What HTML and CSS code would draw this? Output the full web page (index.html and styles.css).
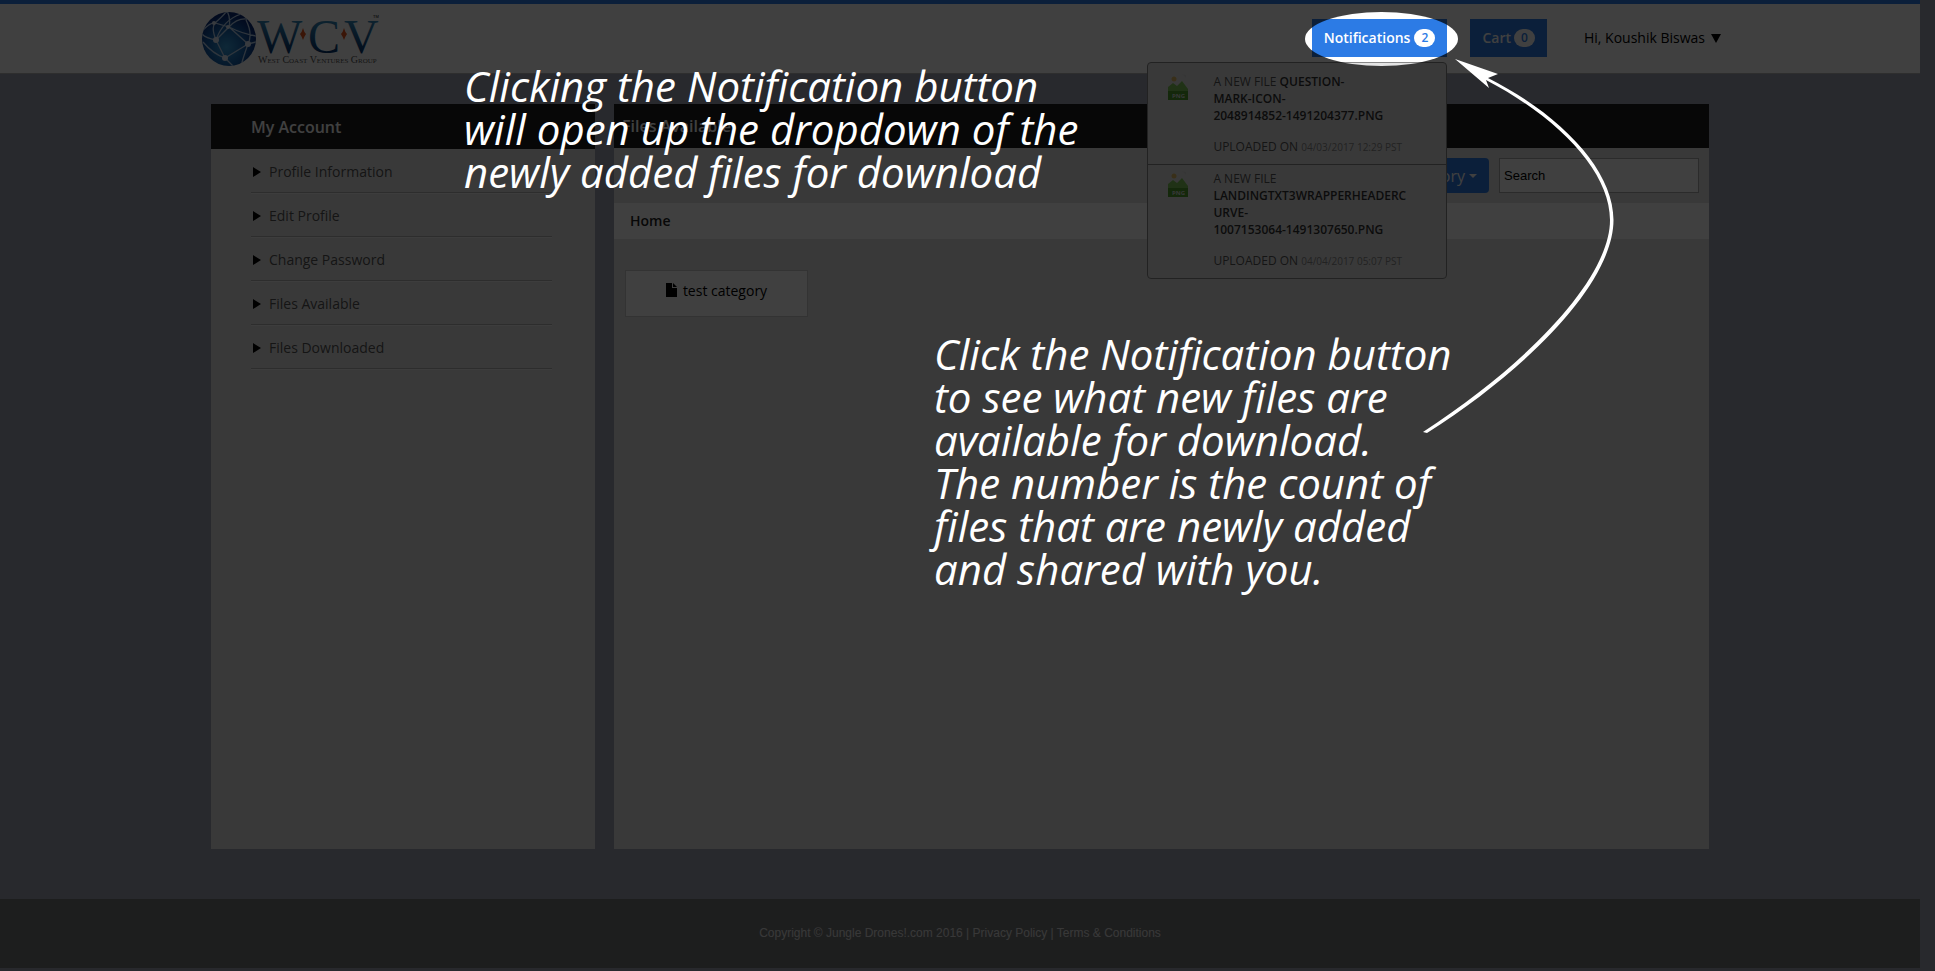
FILE: index.html
```html
<!DOCTYPE html>
<html lang="en">
<head>
<meta charset="utf-8">
<title>Files Available</title>
<link rel="stylesheet" href="styles.css">
</head>
<body>
<header class="topbar">
  <a class="logo" href="#" aria-label="West Coast Ventures Group">
    <svg width="182" height="58" viewBox="0 0 182 58">
      <defs>
        <radialGradient id="globe" cx="45%" cy="65%" r="60%">
          <stop offset="0" stop-color="#3aa0dc"/><stop offset=".55" stop-color="#1763ae"/><stop offset="1" stop-color="#0a2a78"/>
        </radialGradient>
        <linearGradient id="ink" x1="0" y1="0" x2="0" y2="1">
          <stop offset="0.2" stop-color="#3689ba"/><stop offset=".8" stop-color="#04346e"/>
        </linearGradient>
        <clipPath id="ball"><circle cx="28" cy="29" r="27"/></clipPath>
      </defs>
      <circle cx="28" cy="29" r="27" fill="url(#globe)"/>
      <g clip-path="url(#ball)" fill="none" stroke="#b9d2ee" stroke-width="1.3">
        <path d="M15 30L24 48L47 34L28 17L15 30M24 48Q12 44 2 32M24 48L32 56M47 34Q52 24 45 10M47 34L55 32M47 34Q42 48 40 56M15 30Q10 18 14 13L28 17Q30 8 26 1M15 30Q22 10 40 4M2 20Q10 12 14 13Q22 6 26 1M28 17Q42 24 55 26M28 17Q36 8 46 9M15 30Q4 28 1 24"/>
        <g fill="#dfe9fa" stroke="none"><circle cx="15" cy="30" r="3"/><circle cx="24" cy="48" r="3"/><circle cx="47" cy="34" r="3"/><circle cx="27" cy="17" r="2"/><circle cx="13" cy="13" r="2"/></g>
      </g>
      <g class="logo-letters" fill="url(#ink)"><text x="56" y="43">W</text><text x="107" y="43">C</text><text x="143" y="43">V</text></g>
      <path d="M102 18Q103 22 105 24Q103 27 102 30Q101 27 99 24Q101 22 102 18ZM143 18Q144 22 146 24Q144 27 143 30Q142 27 140 24Q142 22 143 18Z" fill="#e8531c"/>
      <text class="logo-name" x="57" y="53">West Coast Ventures Group</text>
      <text class="logo-tm" x="172" y="8">TM</text>
    </svg>
  </a>
  <nav class="actions">
    <div class="notify">
      <button class="pill" type="button">Notifications <span class="badge">2</span></button>
      <ul class="dropdown">
        <li class="notice">
          <svg class="png" width="20" height="26" viewBox="0 0 20 26"><circle cx="6" cy="5" r="2.5" fill="#e2bd66"/><path d="M14 0L18 4V1Z" fill="#d8d8d8"/><path d="M0 17V13L5 9L9 12L14 7L20 15V17Z" fill="#7fc85a"/><rect y="17" width="20" height="9" fill="#4fa02e"/><text x="4" y="24">PNG</text></svg>
          <div><p class="file">A NEW FILE <b>QUESTION-<br>MARK-ICON-<br>2048914852-1491204377.PNG</b></p><p>UPLOADED ON <small>04/03/2017 12:29 PST</small></p></div>
        </li>
        <li class="notice">
          <svg class="png" width="20" height="26" viewBox="0 0 20 26"><circle cx="6" cy="5" r="2.5" fill="#e2bd66"/><path d="M14 0L18 4V1Z" fill="#d8d8d8"/><path d="M0 17V13L5 9L9 12L14 7L20 15V17Z" fill="#7fc85a"/><rect y="17" width="20" height="9" fill="#4fa02e"/><text x="4" y="24">PNG</text></svg>
          <div><p class="file">A NEW FILE <b><br>LANDINGTXT3WRAPPERHEADERC<br>URVE-<br>1007153064-1491307650.PNG</b></p><p>UPLOADED ON <small>04/04/2017 05:07 PST</small></p></div>
        </li>
      </ul>
      <div class="spotlight"></div>
    </div>
    <button class="pill cart" type="button">Cart <span class="badge">0</span></button>
    <button class="user" type="button">Hi, Koushik Biswas <svg width="10" height="9" viewBox="0 0 10 9"><path d="M0 0H10L5 9Z"/></svg></button>
  </nav>
</header>

<main class="content">
  <aside class="panel">
    <h2 class="panel-title account-title">My Account</h2>
    <ul class="menu">
      <li><a href="#">Profile Information</a></li>
      <li><a href="#">Edit Profile</a></li>
      <li><a href="#">Change Password</a></li>
      <li><a href="#">Files Available</a></li>
      <li><a href="#">Files Downloaded</a></li>
    </ul>
  </aside>
  <section class="panel">
    <h2 class="panel-title">Files Available:</h2>
    <div class="tools">
      <button class="category" type="button">Category <span class="caret"></span></button>
      <input class="search" type="text" value="Search" aria-label="Search">
    </div>
    <div class="crumbs"><a href="#">Home</a></div>
    <a class="folder" href="#"><svg width="11" height="14" viewBox="0 0 11 14"><path d="M0 0H6V5H11V14H0ZM7 0L11 4H7Z"/></svg>test category</a>
  </section>
</main>

<footer class="footer">Copyright © Jungle Drones!.com 2016 | <a href="#">Privacy Policy</a> | <a href="#">Terms &amp; Conditions</a></footer>

<div class="guide">
  <p class="note note-top">Clicking the Notification button<br>will open up the dropdown of the<br>newly added files for download</p>
  <p class="note note-middle">Click the Notification button<br>to see what new files are<br>available for download.<br>The number is the count of<br>files that are newly added<br>and shared with you.</p>
  <svg class="arrow" width="195" height="380" viewBox="1422 56 195 380" fill="#fff"><path d="M1455 59L1498 74L1488 78C1561 115 1613.500 170 1613.500 220C1613.500 281 1531 367 1427 433L1423 432C1529 363 1610 278 1610 220C1610 172 1559 118 1486 80L1489 88Z"/></svg>
</div>
</body>
</html>
```
FILE: styles.css
```css
* { box-sizing: border-box; }
body {
  margin: 0;
  min-height: 100vh;
  padding: 0 15px 3px 0;
  display: flex;
  flex-direction: column;
  position: relative;
  background: #a0a4b2;
  color: #000;
  font: 14px/20px "Open Sans", sans-serif;
}
button, input { font: inherit; }
button { border: 0; cursor: pointer; }
a { color: inherit; text-decoration: none; }
ul, p, h2 { margin: 0; padding: 0; }
ul { list-style: none; }

.topbar {
  display: flex;
  justify-content: space-between;
  align-items: flex-start;
  height: 74px;
  padding: 0 199px 0 201px;
  border-top: 4px solid #2c7be5;
  border-bottom: 1px solid #b8b8b8;
  background: #fff;
}
.logo { padding-top: 6px; }
.logo svg { display: block; }
.logo-letters { font: 48px "Liberation Serif", serif; }
.logo-name { font: 10px "Liberation Serif", serif; font-variant: small-caps; fill: #555; }
.logo-tm { font: 4px "Liberation Sans", sans-serif; }
.actions { display: flex; padding-top: 15px; }
.notify { position: relative; margin-right: 23px; }
.pill {
  display: flex;
  align-items: center;
  gap: 4px;
  height: 38px;
  padding: 0 12px;
  background: #2c7be5;
  color: #fff;
  font-weight: 600;
}
.cart { gap: 3px; }
.badge {
  width: 21px;
  border-radius: 9px;
  background: #fff;
  color: #2c7be5;
  font-size: 12px;
  line-height: 18px;
  text-align: center;
}
.user {
  display: flex;
  align-items: center;
  gap: 6px;
  height: 38px;
  margin-left: 37px;
  padding: 0;
  background: none;
  white-space: nowrap;
}
.dropdown {
  position: absolute;
  z-index: 5;
  top: 43px;
  right: 0;
  width: 300px;
  padding-top: 5px;
  border: 1px solid #888;
  border-radius: 4px;
  background: #e4e4e4;
  color: #555;
  font-size: 12px;
  line-height: 17px;
}
.notice { display: flex; gap: 25px; padding: 5px 20px 8px; }
.notice + .notice { border-top: 1px solid #888; }
.notice b { color: #333; font-weight: 600; }
.notice small { color: #888; font-size: 10px; }
.notice p { white-space: nowrap; }
.notice .file { margin-bottom: 14px; }
.png { flex: none; margin-top: 1px; }
.png text { font: bold 6px "Open Sans", sans-serif; fill: #ddd; }
.spotlight {
  position: absolute;
  z-index: 10;
  top: -7px;
  left: -7px;
  right: -11px;
  height: 54px;
  border-radius: 50%;
  box-shadow: 0 0 0 3000px rgba(0, 0, 0, .75);
  pointer-events: none;
}

.content {
  flex: 1;
  display: grid;
  grid-template-columns: 384px minmax(0, 1fr);
  gap: 19px;
  padding: 30px 211px 50px;
}
.panel { background: #e4e4e4; }
.panel-title {
  padding: 12px 8px;
  background: #1c1c1c;
  color: #fff;
  font-size: 16px;
  font-weight: 600;
  line-height: 20px;
}
.account-title { padding: 13px 40px 12px; }
.menu { padding: 0 43px 0 40px; }
.menu li {
  padding: 13px 0 10px;
  border-bottom: 1px solid #b4b4b4;
  box-shadow: 0 1px #f4f4f4;
}
.menu a { display: flex; align-items: center; gap: 8px; color: #555; }
.menu a::before {
  content: "";
  margin-left: 2px;
  border-left: 8px solid #000;
  border-top: 5px solid transparent;
  border-bottom: 5px solid transparent;
}
.tools { display: flex; justify-content: flex-end; gap: 10px; padding: 10px; }
.category {
  display: flex;
  align-items: center;
  gap: 4px;
  height: 35px;
  padding: 0 12px;
  border-radius: 4px;
  background: #2c7be5;
  color: #fff;
  font-size: 16px;
}
.caret { border-top: 4px solid #fff; border-left: 4px solid transparent; border-right: 4px solid transparent; }
.search {
  width: 200px;
  height: 35px;
  padding: 0 4px;
  border: 1px solid #aaa;
  background: #fff;
  font: 13px "Liberation Sans", sans-serif;
}
.crumbs { padding: 8px 16px; background: #fff; font-weight: 600; color: #222; }
.folder {
  display: flex;
  justify-content: center;
  gap: 6px;
  width: 183px;
  height: 47px;
  margin: 31px 11px;
  padding-top: 10px;
  border: 1px solid #ccc;
  background: #fff;
}
.folder svg { margin-top: 2px; }

.footer {
  background: #75777a;
  color: #e0e0e0;
  text-align: center;
  padding: 24px 0 25px;
  font: 12px/20px "Liberation Sans", sans-serif;
}

/* Walkthrough layer above the dimmed page */
.guide { position: absolute; z-index: 20; inset: 0; pointer-events: none; color: #fff; }
.note {
  position: absolute;
  font: italic 42px/43px "Open Sans", sans-serif;
  white-space: nowrap;
}
.note-top { left: 464px; top: 64px; }
.note-middle { left: 934px; top: 332px; }
.arrow { position: absolute; left: 1422px; top: 56px; }
```
